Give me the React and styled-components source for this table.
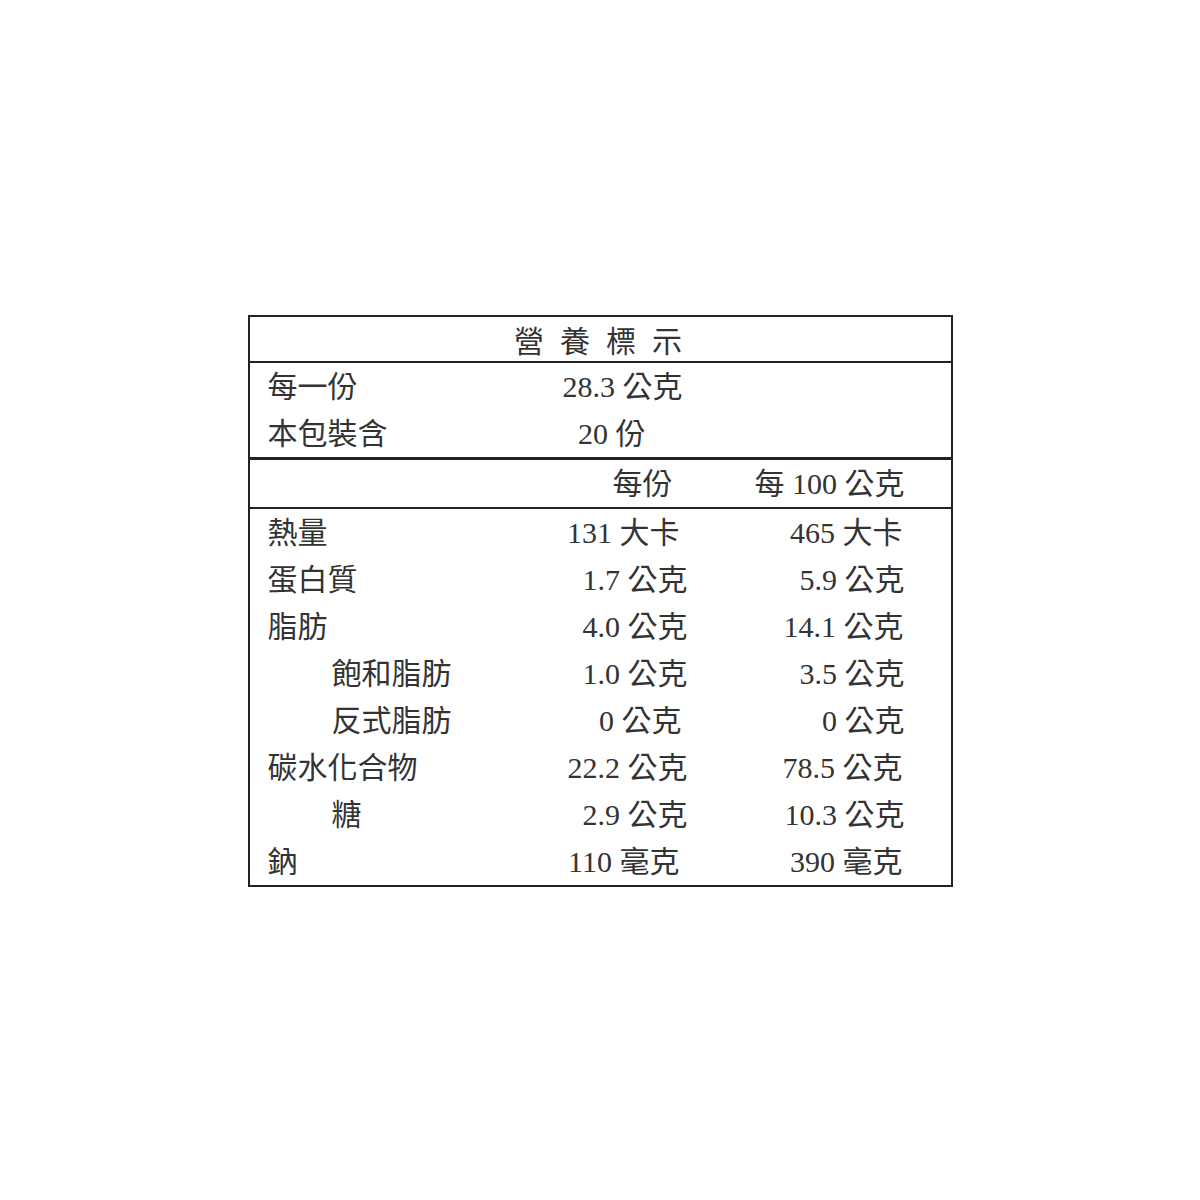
import React from 'react'
import styled, { createGlobalStyle } from 'styled-components'

const rows = [
  { name: '熱量', per: '131 大卡', per100: '465 大卡', nudge: 8, nudge100: 2 },
  { name: '蛋白質', per: '1.7 公克', per100: '5.9 公克' },
  { name: '脂肪', per: '4.0 公克', per100: '14.1 公克', nudge100: 1 },
  { name: '飽和脂肪', per: '1.0 公克', per100: '3.5 公克', sub: true },
  { name: '反式脂肪', per: '0 公克', per100: '0 公克', sub: true, nudge: 6 },
  { name: '碳水化合物', per: '22.2 公克', per100: '78.5 公克', nudge100: 2 },
  { name: '糖', per: '2.9 公克', per100: '10.3 公克', sub: true },
  { name: '鈉', per: '110 毫克', per100: '390 毫克', nudge: 8, nudge100: 2 }
]

function App () {
  return (
    <>
      <GlobalStyle />
      <Page>
        <Label>
          <Title>營養標示</Title>

          <Section>
            <Row>
              <Name>每一份</Name>
              <Value $nudge={5}>28.3 公克</Value>
              <Value />
            </Row>
            <Row>
              <Name>本包裝含</Name>
              <Value $nudge={42}>20 份</Value>
              <Value />
            </Row>
          </Section>

          <Header>
            <Name />
            <Value $nudge={15}>每份</Value>
            <Value>每 100 公克</Value>
          </Header>

          {/* nutrients */}
          <div>
            {rows.map(r => (
              <Row key={r.name}>
                <Name $sub={r.sub}>{r.name}</Name>
                <Value $nudge={r.nudge}>{r.per}</Value>
                <Value $nudge={r.nudge100}>{r.per100}</Value>
              </Row>
            ))}
          </div>
        </Label>
      </Page>
    </>
  )
}

export default App

const GlobalStyle = createGlobalStyle`
  body {
    margin: 0;
    background: #fff;
  }
`

const Page = styled.div`
  min-height: 100vh;
  display: flex;
  align-items: center;
  justify-content: center;
  font-family: 'Liberation Serif', 'Noto Sans CJK TC', serif;
  font-size: 30px;
  color: #333;
`

const Label = styled.div`
  box-sizing: border-box;
  width: 705px;
  border: 2px solid #222;
  margin-top: 2px;
`

const Title = styled.div`
  height: 44px;
  border-bottom: 2px solid #222;
  display: flex;
  align-items: center;
  justify-content: center;
  letter-spacing: 16px;
  padding-left: 12px;
`

const Section = styled.div`
  border-bottom: 3px solid #222;
`

const Row = styled.div`
  display: grid;
  grid-template-columns: 1fr 180px 217px;
  align-items: center;
  height: 47px;
  padding: 0 46px 0 18px;
  line-height: 1;
  white-space: nowrap;
`

const Header = styled(Row)`
  border-bottom: 2px solid #222;
`

const Name = styled.span`
  padding-left: ${p => (p.$sub ? '64px' : '0')};
`

const Value = styled.span`
  text-align: right;
  margin-right: ${p => p.$nudge || 0}px;
`
